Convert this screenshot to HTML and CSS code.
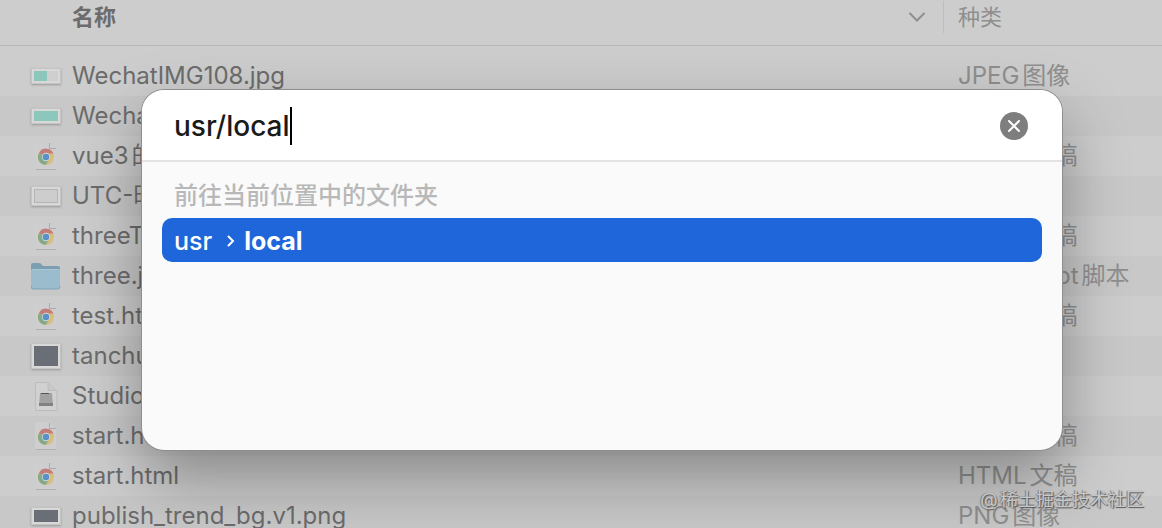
FILE: index.html
```
<!DOCTYPE html>
<html lang="zh-CN">
<head>
    <title>前往文件夹</title>
    <meta charset="UTF-8">
    <meta name="viewport" content="width=device-width, initial-scale=1.0">
    <link rel="stylesheet" href="styles.css">
</head>

<body>
    <!-- shared file icons -->
    <svg class="sprite" aria-hidden="true">
        <symbol id="chrome" viewBox="0 0 30 30">
            <path d="M4 1H18L25 8V28H4Z" fill="#cecece"/>
            <path d="M5 28.500H25" stroke="#b0b0b0"/>
            <path d="M18.500 2V7.500H25" fill="none" stroke="#b0a8a8"/>
            <circle cx="15" cy="16" r="8" fill="#d9bd7a"/>
            <path d="M15 16L8 12A8 8 0 0 1 22.500 12.500H15Z" fill="#c67d79"/>
            <path d="M15 16L8 12A8 8 0 0 0 14.500 24L18.500 18Z" fill="#86aa88"/>
            <circle cx="15" cy="16" r="4.200" fill="#d5d7d8"/>
            <circle cx="15" cy="16" r="3.300" fill="#5a92c6"/>
        </symbol>
        <symbol id="folder" viewBox="0 0 30 30">
            <path d="M0 4Q0 2 2 2H8Q10 2 11 4L12 5H27Q29 5 29 7V12H0Z" fill="#7b9fb1"/>
            <path d="M0 9Q0 8 1 8H28Q29 8 29 9V26Q29 28 27 28H2Q0 28 0 26Z" fill="#9abccd"/>
            <path d="M0 25Q0 28 2 28H27Q29 28 29 25" fill="none" stroke="#7fa2b3"/>
            <path d="M1 8.500H28" stroke="#a9c8d6"/>
        </symbol>
        <symbol id="disk" viewBox="0 0 30 30">
            <path d="M4.500 1.500H17L26 10V29.500H4.500Z" fill="#d1d1d1" stroke="#bcbcbc"/>
            <path d="M17 1.500V9.500H26" fill="#c7c7c7" stroke="#bcbcbc"/>
            <path d="M9 12H21L22 25H8Z" fill="#a0a29f"/>
            <path d="M10 12.500H18" stroke="#555"/>
            <path d="M8 22H22V25H8Z" fill="#808280"/>
        </symbol>
    </svg>

    <main class="finder">
        <table class="files">
            <thead>
                <tr>
                    <th class="name-head">
                        <div class="sort">
                            名称
                            <svg class="sort-arrow" viewBox="0 0 16 10" aria-hidden="true"><path d="M1 1.500L8 8.500L15 1.500"/></svg>
                        </div>
                    </th>
                    <th class="kind-head"><div class="kind-label">种类</div></th>
                </tr>
            </thead>
            <tbody>
                <tr>
                    <td><div class="file"><span class="icon"><span class="thumb half"></span></span>WechatIMG108.jpg</div></td>
                    <td>JPEG图像</td>
                </tr>
                <tr>
                    <td><div class="file"><span class="icon"><span class="thumb full"></span></span>WechatIMG107.png</div></td>
                    <td>PNG图像</td>
                </tr>
                <tr>
                    <td><div class="file"><svg class="icon"><use href="#chrome"/></svg>vue3的使用.html</div></td>
                    <td>HTML文稿</td>
                </tr>
                <tr>
                    <td><div class="file"><span class="icon"><span class="thumb blank"></span></span>UTC-时间.png</div></td>
                    <td>PNG图像</td>
                </tr>
                <tr>
                    <td><div class="file"><svg class="icon"><use href="#chrome"/></svg>threeTest.html</div></td>
                    <td>HTML文稿</td>
                </tr>
                <tr>
                    <td><div class="file"><svg class="icon"><use href="#folder"/></svg>three.js</div></td>
                    <td>JavaScript脚本</td>
                </tr>
                <tr>
                    <td><div class="file"><svg class="icon"><use href="#chrome"/></svg>test.html</div></td>
                    <td>HTML文稿</td>
                </tr>
                <tr>
                    <td><div class="file"><span class="icon"><span class="thumb dark tall"></span></span>tanchuang.png</div></td>
                    <td>PNG图像</td>
                </tr>
                <tr>
                    <td><div class="file"><svg class="icon"><use href="#disk"/></svg>Studio.dmg</div></td>
                    <td>磁盘映像</td>
                </tr>
                <tr>
                    <td><div class="file"><svg class="icon"><use href="#chrome"/></svg>start.html</div></td>
                    <td>HTML文稿</td>
                </tr>
                <tr>
                    <td><div class="file"><svg class="icon"><use href="#chrome"/></svg>start.html</div></td>
                    <td>HTML文稿</td>
                </tr>
                <tr>
                    <td><div class="file"><span class="icon"><span class="thumb dark"></span></span>publish_trend_bg.v1.png</div></td>
                    <td>PNG图像</td>
                </tr>
            </tbody>
        </table>
    </main>

    <div class="goto" role="dialog" aria-label="前往文件夹">
        <form class="search">
            <input class="path" type="text" value="usr/local" size="9" aria-label="路径" autocomplete="off" spellcheck="false">
            <span class="caret"></span>
            <button class="clear" type="reset" aria-label="清除">
                <svg viewBox="0 0 28 28" aria-hidden="true"><circle cx="14" cy="14" r="14"/><path d="M9 9L19 19M19 9L9 19"/></svg>
            </button>
        </form>
        <div class="results">
            <h2>前往当前位置中的文件夹</h2>
            <a class="result" href="#">
                <span>usr</span>
                <svg class="chevron" viewBox="0 0 8 12" aria-hidden="true"><path d="M1.500 1.500L6 6L1.500 10.500"/></svg>
                <strong>local</strong>
            </a>
        </div>
    </div>

    <div class="watermark">@稀土掘金技术社区</div>
</body>
</html>
```
FILE: styles.css
```
:root {
    --window: #cdcdcd;
    --stripe: #c8c8c8;
    --name: #6c6c6c;
    --kind: #8f8f8f;
    --accent: #1e66da;
}

* {
    box-sizing: border-box;
}

body {
    position: relative;
    margin: 0;
    height: 100vh;
    overflow: hidden;
    background: var(--window);
    color: var(--name);
    font-family: Inter, "Noto Sans CJK SC", sans-serif;
    font-size: 24px;
    line-height: 32px;
    text-autospace: normal;
}

.sprite {
    display: none;
}

.finder {
    height: 100%;
    overflow: hidden;
}

.files {
    width: 100%;
    table-layout: fixed;
    border-collapse: separate;
    border-spacing: 0;
}

.files th {
    height: 46px;
    padding: 0 0 12px;
    border-bottom: 1px solid #b8b8b8;
    font-size: 22px;
    text-align: left;
}

.files .name-head {
    padding-left: 72px;
}

.kind-head {
    width: 219px;
}

.sort {
    display: flex;
    align-items: center;
    justify-content: space-between;
    padding-right: 18px;
}

.sort-arrow {
    width: 16px;
    height: 10px;
    fill: none;
    stroke: #8f8f8f;
    stroke-width: 2;
    stroke-linecap: round;
}

.kind-label {
    padding-left: 14px;
    border-left: 1px solid #bdbdbd;
    color: var(--kind);
    font-weight: 400;
}

.files tbody::before {
    content: "";
    display: block;
    height: 10px;
}

.files td {
    height: 40px;
    padding: 0;
    white-space: nowrap;
}

.files td + td {
    padding-left: 15px;
    color: var(--kind);
}

.files tbody tr:nth-child(even) {
    background: var(--stripe);
}

.file {
    display: flex;
    align-items: center;
    gap: 11px;
    padding-left: 31px;
}

.icon {
    display: flex;
    align-items: center;
    flex: none;
    width: 30px;
    height: 30px;
}

.thumb {
    width: 30px;
    height: 16px;
    border: 3px solid #d8d8d8;
    outline: 1px solid #c4c4c4;
    outline-offset: -1px;
    box-shadow: 0 1px 2px #999;
}

.half {
    background: linear-gradient(90deg, #8bc7bb 55%, #cfcfcf 55%);
}

.full {
    background: #8bc7bb;
}

.blank {
    height: 20px;
    background: #cdcdcd;
    box-shadow: inset 0 0 0 1px #b5b5b5, 0 1px 2px #999;
}

.dark {
    height: 18px;
    background: #6a6e77;
}

.tall {
    height: 26px;
}

/* Go to Folder sheet */
.goto {
    position: absolute;
    top: 90px;
    right: 100px;
    left: 142px;
    min-height: 360px;
    overflow: hidden;
    border-radius: 22px;
    background: #fafafa;
    box-shadow: 0 0 0 1px #8e8e8e, 0 28px 64px rgba(0, 0, 0, 0.34);
}

.search {
    display: flex;
    align-items: center;
    height: 72px;
    padding: 2px 34px 0 32px;
    border-bottom: 2px solid #e3e3e3;
    background: white;
}

.path {
    field-sizing: content;
    max-width: 90%;
    padding: 0;
    border: none;
    outline: none;
    background: none;
    color: #1a1a1a;
    caret-color: transparent;
    font: inherit;
    font-size: 28px;
    font-weight: 500;
}

.caret {
    width: 2px;
    height: 38px;
    background: black;
}

.clear {
    width: 28px;
    height: 28px;
    margin-left: auto;
    padding: 0;
    border: none;
    background: none;
    cursor: pointer;
}

.clear svg {
    display: block;
    fill: #7e7e7e;
    stroke-width: 2;
    stroke-linecap: round;
}

.clear path {
    stroke: white;
}

.results {
    padding: 18px 20px;
}

.results h2 {
    margin: 0;
    padding: 0 12px 6px;
    color: #b8b8b8;
    font-size: 24px;
    font-weight: 500;
}

.result {
    display: flex;
    align-items: center;
    height: 44px;
    padding: 2px 12px 0;
    border-radius: 10px;
    background: var(--accent);
    color: white;
    font-size: 25px;
    font-weight: 500;
    text-decoration: none;
}

.chevron {
    width: 8px;
    height: 12px;
    margin: 0 9px 0 15px;
    fill: none;
    stroke: white;
    stroke-width: 2;
    stroke-linecap: round;
}

.watermark {
    position: absolute;
    right: 18px;
    bottom: 14px;
    color: #c8c8c8;
    font-size: 18px;
    line-height: 28px;
    text-shadow: 1px 1px 1px #555, -1px 0 1px #777;
}
```
